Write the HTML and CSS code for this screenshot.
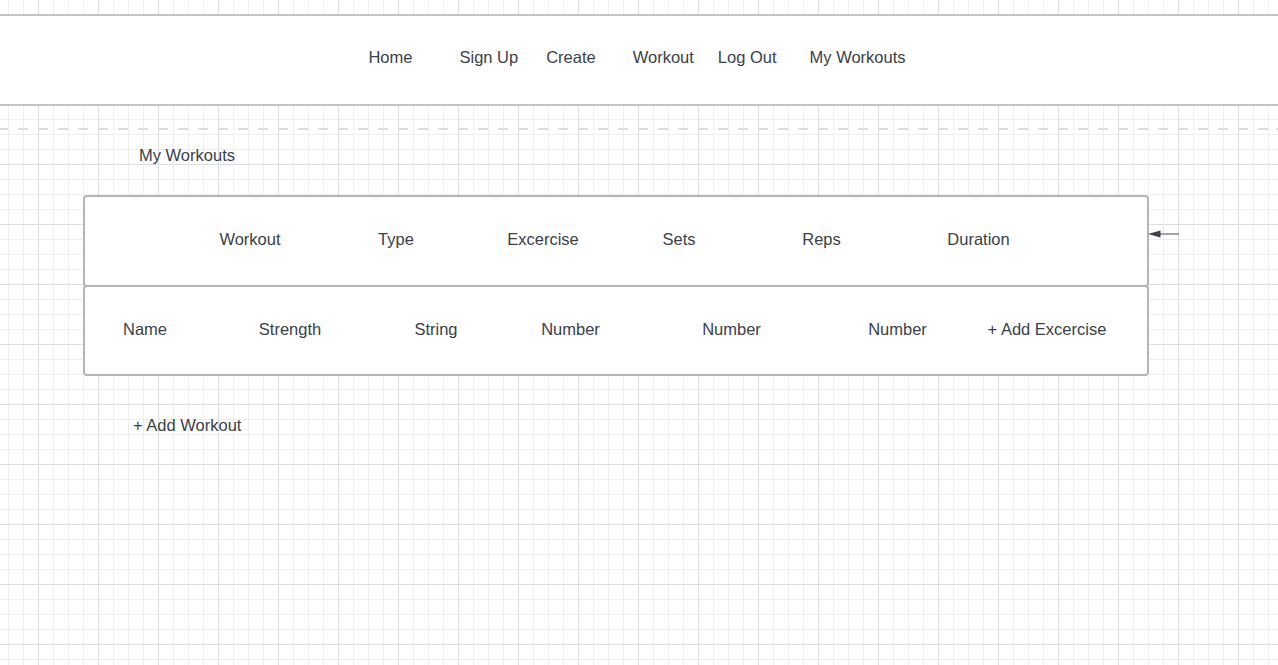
FILE: index.html
```html
<!DOCTYPE html>
<html lang="en">
<head>
<meta charset="utf-8">
<title>My Workouts</title>
<link rel="stylesheet" href="styles.css">
</head>
<body>
  <header class="topbar">
    <nav class="nav">
      <span class="nav-item">Home</span>
      <span class="nav-item">Sign Up</span>
      <span class="nav-item">Create</span>
      <span class="nav-item">Workout</span>
      <span class="nav-item">Log Out</span>
      <span class="nav-item">My Workouts</span>
    </nav>
  </header>
  <div class="dash-line"></div>

  <main class="content">
    <h1 class="page-title">My Workouts</h1>

    <div class="table-wrap">
      <div class="box row-head">
        <span>Workout</span>
        <span>Type</span>
        <span>Excercise</span>
        <span>Sets</span>
        <span>Reps</span>
        <span>Duration</span>
      </div>
      <div class="box row-data">
        <span>Name</span>
        <span>Strength</span>
        <span>String</span>
        <span>Number</span>
        <span>Number</span>
        <span>Number</span>
        <span>+ Add Excercise</span>
      </div>
      <svg class="connector" width="32" height="10" viewBox="0 0 32 10">
        <line x1="10" y1="5" x2="31" y2="5" stroke="#80848a" stroke-width="1.5"/>
        <polygon points="0,5 12.5,1.4 12.5,8.6" fill="#3b4149"/>
      </svg>
    </div>

    <div class="add-workout">+ Add Workout</div>
  </main>
</body>
</html>
```

FILE: styles.css
```css
html, body {
  margin: 0;
  padding: 0;
}

body {
  width: 1278px;
  height: 665px;
  overflow: hidden;
  font-family: "Liberation Sans", Arial, sans-serif;
  font-size: 16.5px;
  color: #3a414b;
  background-color: #ffffff;
  background-image:
    linear-gradient(to right, #dddddd 1px, transparent 1px),
    linear-gradient(to bottom, #dddddd 1px, transparent 1px),
    linear-gradient(to right, #eeeeee 1px, transparent 1px),
    linear-gradient(to bottom, #eeeeee 1px, transparent 1px);
  background-size: 60px 60px, 60px 60px, 15px 15px, 15px 15px;
  background-position: 38px 0, 0 44px, 8px 0, 0 14px;
  padding-top: 14px;
  box-sizing: border-box;
}

.topbar {
  height: 92px;
  box-sizing: border-box;
  background: #ffffff;
  border-top: 2px solid #c0c2c6;
  border-bottom: 2px solid #c0c2c6;
  display: flex;
  align-items: center;
  justify-content: center;
  padding-bottom: 6px;
}

.nav {
  display: flex;
  align-items: center;
  padding-right: 4px;
}

.nav-item:nth-child(2) { margin-left: 47px; }
.nav-item:nth-child(3) { margin-left: 28px; }
.nav-item:nth-child(4) { margin-left: 37px; }
.nav-item:nth-child(5) { margin-left: 24px; }
.nav-item:nth-child(6) { margin-left: 33px; }

.dash-line {
  margin-top: 22px;
  height: 2px;
  background-image: repeating-linear-gradient(to right, #dcdcdc 0, #dcdcdc 10px, transparent 10px, transparent 20px);
  background-position: -2px 0;
}

.content {
  padding-left: 83px;
}

.page-title {
  margin: 15.5px 0 0 56px;
  font-size: 16.5px;
  font-weight: normal;
  line-height: 19px;
}

.table-wrap {
  position: relative;
  width: 1066px;
  margin-top: 30px;
}

.box {
  box-sizing: border-box;
  background: #ffffff;
  border: 2px solid #b2b5ba;
  border-radius: 4px;
  display: grid;
  align-items: center;
  text-align: center;
  white-space: nowrap;
}

.row-head {
  height: 92px;
  padding-left: 92px;
  padding-bottom: 3px;
  grid-template-columns: 146px 146px 148px 124px 161px 153px;
}

.row-data {
  height: 91px;
  margin-top: -2px;
  padding-bottom: 1px;
  grid-template-columns: 120px 170px 122px 147px 175px 157px 142px;
}

.connector {
  position: absolute;
  left: 1065px;
  top: 34px;
}

.add-workout {
  margin: 40px 0 0 50px;
  line-height: 19px;
}
```
